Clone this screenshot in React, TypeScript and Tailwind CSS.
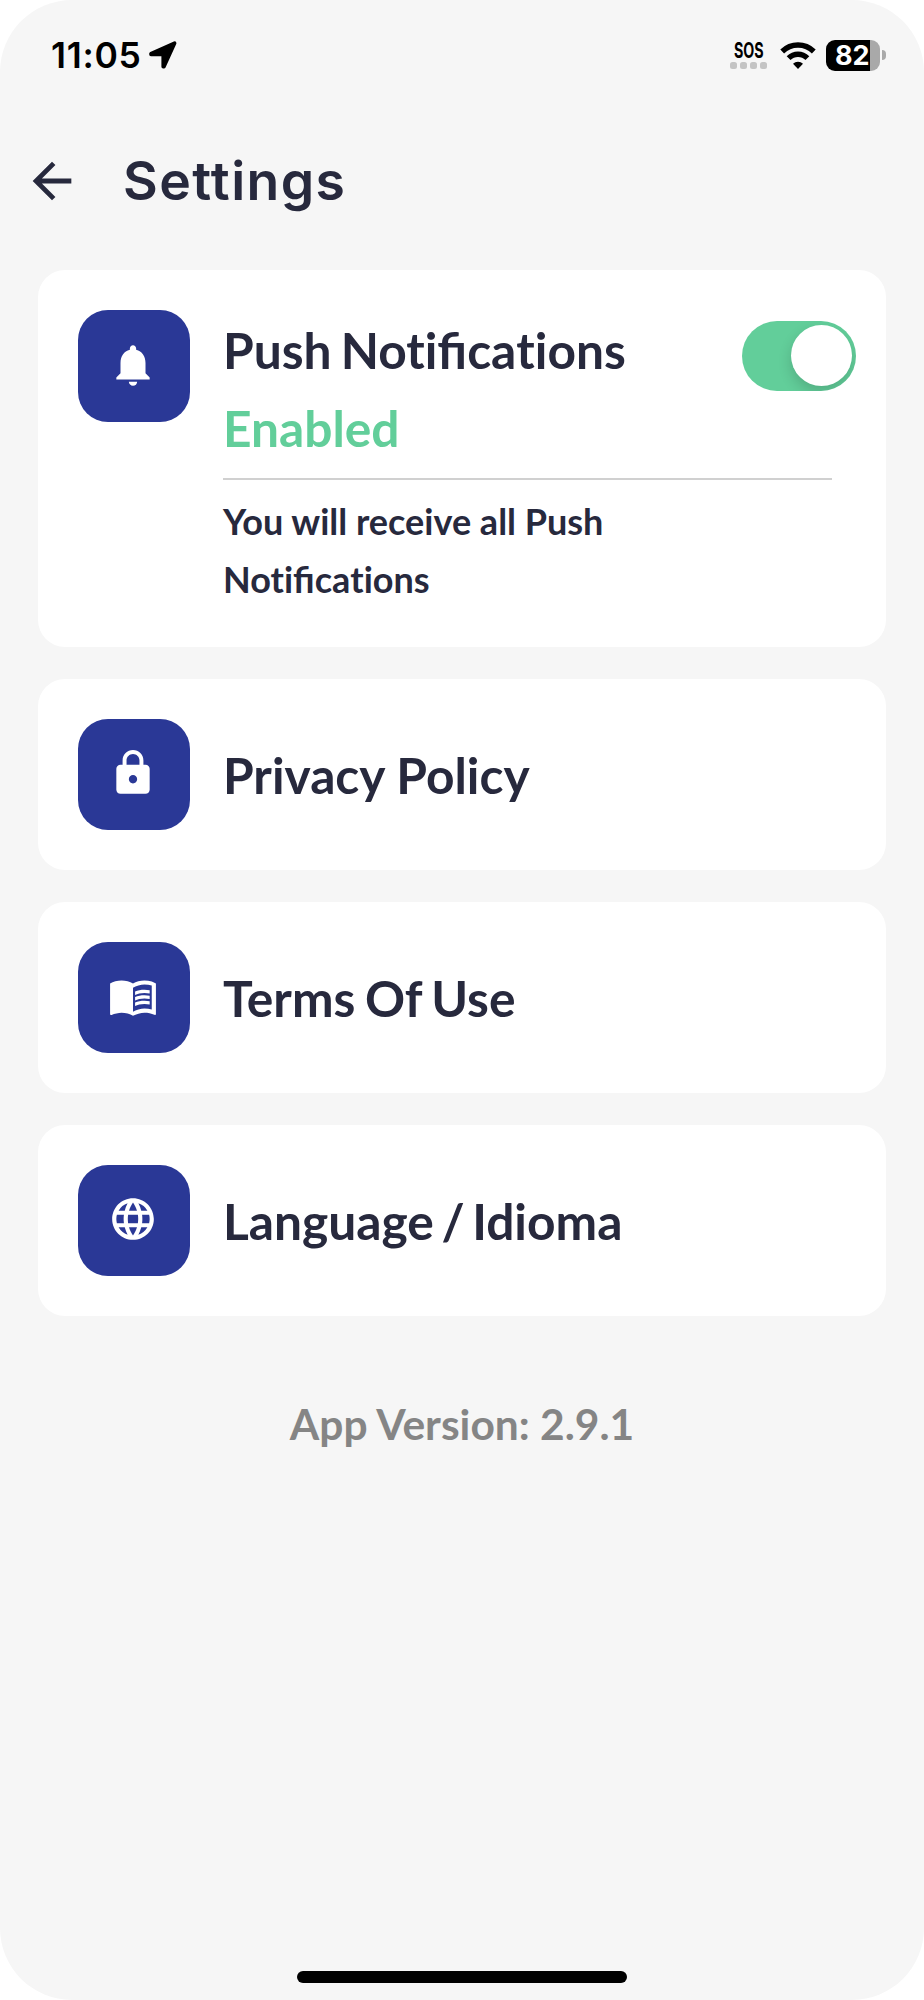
import { useState, type ReactNode } from 'react';
import type { IconType } from 'react-icons';
import { MdArrowBack, MdLanguage, MdLock, MdMenuBook, MdNotifications } from 'react-icons/md';
import { clsx } from 'clsx';

const StatusBar = () => (
  <div className="flex h-[110px] items-center justify-between pl-[51px] pr-[38px] font-['Inter',sans-serif] text-black">
    <div className="flex items-center">
      <span className="w-[98px] whitespace-nowrap pt-0.5 text-[35.5px] font-semibold leading-none tracking-[0.7px]">
        11:05
      </span>
      <svg
        viewBox="0 0 28 28"
        className="h-7 w-7"
        fill="currentColor"
        stroke="currentColor"
        strokeWidth="3.6"
        strokeLinejoin="round"
      >
        <path d="M2 12.600 25.600 2.200 14.900 25.800 14.200 25.800 14.200 13.400 2 13.400Z" />
      </svg>
    </div>
    <div className="flex items-center">
      <div className="flex w-[37px] flex-col items-center gap-[3px] pt-px">
        <span className="origin-center scale-x-[0.68] text-[21px] font-bold leading-[17px]">SOS</span>
        <div className="flex gap-[3px]">
          {[0, 1, 2, 3].map((dot) => (
            <span key={dot} className="h-[7px] w-[7px] rounded-[2.500px] bg-[#c4c4c4]" />
          ))}
        </div>
      </div>
      <svg viewBox="0 0 36 27" className="ml-[13px] h-[27px] w-9" fill="none" stroke="currentColor" strokeWidth="5.4">
        <path d="M2.200 9.500a22.500 22.500 0 0 1 31.600 0" />
        <path d="M8.600 16.200a13.300 13.300 0 0 1 18.800 0" />
        <path d="M18 27l-5-5.200a7.200 7.200 0 0 1 10 0z" fill="currentColor" stroke="none" />
      </svg>
      <div className="ml-[10px] flex h-[31px] w-[54px] items-center overflow-hidden rounded-[9px] bg-[linear-gradient(to_right,#000_82%,#a9a9a9_82%)]">
        <span className="pl-[9px] text-[27px] font-bold leading-none text-white">82</span>
      </div>
      <span className="ml-0.5 h-[10px] w-1 rounded-r-full bg-[#a9a9a9]" />
    </div>
  </div>
);

const IconTile = ({ icon: Icon }: { icon: IconType }) => (
  <div className="flex h-[111.500px] w-28 shrink-0 items-center justify-center rounded-[30px] bg-[#2a3896] pb-0.5 pr-0.5 text-white">
    <Icon size={50} />
  </div>
);

const Card = ({ icon, children }: { icon: IconType; children: ReactNode }) => (
  <section className="flex gap-[33px] rounded-[27px] bg-white py-10 pl-10 pr-[30px]">
    <IconTile icon={icon} />
    {children}
  </section>
);

const Toggle = ({ checked, onChange }: { checked: boolean; onChange: () => void }) => (
  <button
    type="button"
    role="switch"
    aria-checked={checked}
    aria-label="Push Notifications"
    onClick={onChange}
    className={clsx(
      'flex h-[70px] w-[114px] items-center overflow-hidden rounded-full px-1',
      checked ? 'justify-end bg-[#62ce9a]' : 'justify-start bg-[#e4e4e8]'
    )}
  >
    <span className="h-[61px] w-[61px] rounded-full bg-white shadow-[0_6px_14px_rgba(0,0,0,0.16)]" />
  </button>
);

// Lato joins "ti" as well as "fi"; only the "fi" ligature is wanted here
const Notifications = () => (
  <>
    <span className="[font-variant-ligatures:none]">Not</span>
    <span>ifica</span>
    <span className="[font-variant-ligatures:none]">tions</span>
  </>
);

const links = [
  { label: 'Privacy Policy', icon: MdLock, spacing: '' },
  { label: 'Terms Of Use', icon: MdMenuBook, spacing: '[word-spacing:-2.5px]' },
  { label: 'Language / Idioma', icon: MdLanguage, spacing: '[word-spacing:-4.5px]' },
];

export default function App() {
  const [pushEnabled, setPushEnabled] = useState(true);

  return (
    <div className="h-[2000px] w-[924px] bg-white">
      <div className="flex h-full flex-col overflow-hidden rounded-[72px] bg-[#f6f6f6] font-['Lato',sans-serif] text-[#27293d]">
        <StatusBar />

        <header className="flex h-[142px] items-center pl-[22.500px]">
          <MdArrowBack size={58} />
          <h1 className="ml-[42.500px] font-['Inter',sans-serif] text-[53.500px] font-semibold leading-none tracking-[1.400px]">
            Settings
          </h1>
        </header>

        <main className="mt-[18px] flex flex-col gap-[31.500px] pl-[38px] pr-[38px]">
          <Card icon={MdNotifications}>
            <div className="flex-1">
              <div className="flex h-[78px] items-center justify-between">
                <h2 className="whitespace-nowrap pt-0.5 text-[49.700px] font-bold leading-[78px] [word-spacing:-3px]">
                  Push <Notifications />
                </h2>
                <div className="mt-[13px]">
                  <Toggle checked={pushEnabled} onChange={() => setPushEnabled(!pushEnabled)} />
                </div>
              </div>
              <p className="pt-px text-[49.700px] font-bold leading-[78px] text-[#62ce9a]">
                {pushEnabled ? 'Enabled' : 'Disabled'}
              </p>
              <hr className="mr-6 mt-[11px] border-t-2 border-[#d0d0d0]" />
              <p className="mb-[-0.5px] mt-[11.500px] w-[440px] text-[36px] font-bold leading-[58px]">
                You will receive all Push <Notifications />
              </p>
            </div>
          </Card>

          {links.map(({ label, icon, spacing }) => (
            <Card key={label} icon={icon}>
              <h2 className={clsx('self-center pt-0.5 text-[49.700px] font-bold leading-[78px]', spacing)}>
                {label}
              </h2>
            </Card>
          ))}
        </main>

        <p className="mt-[82px] text-center text-[42.500px] font-bold leading-[52px] text-[#858585]">
          App Version: 2.9.1
        </p>

        <div className="mb-[17px] mt-auto h-3 w-[330px] self-center rounded-full bg-black" />
      </div>
    </div>
  );
}
